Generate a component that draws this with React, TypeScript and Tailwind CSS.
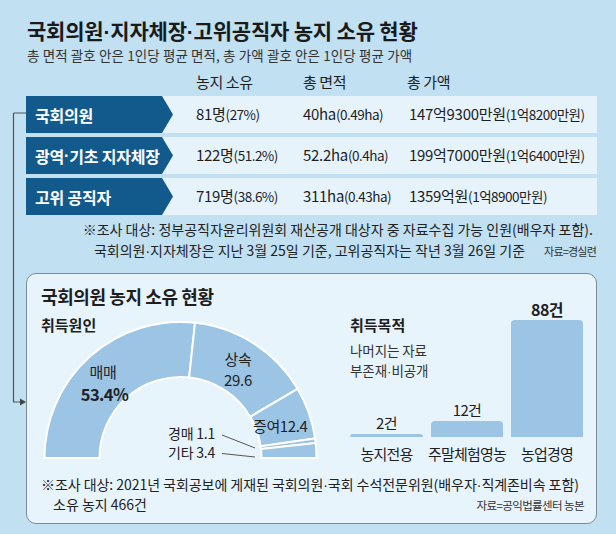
import React from 'react'

interface Row {
  name: string
  count: string
  countP: string
  area: string
  areaP: string
  value: string
  valueP: string
}

const rows: Row[] = [
  { name: '국회의원', count: '81명', countP: '(27%)', area: '40ha', areaP: '(0.49ha)', value: '147억9300만원', valueP: '(1억8200만원)' },
  { name: '광역·기초 지자체장', count: '122명', countP: '(51.2%)', area: '52.2ha', areaP: '(0.4ha)', value: '199억7000만원', valueP: '(1억6400만원)' },
  { name: '고위 공직자', count: '719명', countP: '(38.6%)', area: '311ha', areaP: '(0.43ha)', value: '1359억원', valueP: '(1억8900만원)' },
]

const bars = [
  { label: '농지전용', value: '2건', h: 3, w: 'w-[73px]', bold: false },
  { label: '주말체험영농', value: '12건', h: 16, w: 'w-[72px]', bold: false },
  { label: '농업경영', value: '88건', h: 117, w: 'w-[72px]', bold: true },
]

// the CJK font draws "·" full width; take it from a latin font instead
function Dots({ s }: { s: string }) {
  const parts = s.split('·')
  return (
    <>
      {parts.map((p, i) => (
        <React.Fragment key={i}>
          {i > 0 && <span className="font-['Liberation_Sans',sans-serif]">·</span>}
          {p}
        </React.Fragment>
      ))}
    </>
  )
}

// donut: center / radii in svg coords
const CX = 139.5
const CY = 143
const R = 136
const r = 81

function pt(rad: number, deg: number) {
  const t = (deg * Math.PI) / 180
  return `${(CX + rad * Math.cos(t)).toFixed(2)} ${(CY - rad * Math.sin(t)).toFixed(2)}`
}

function sector(a1: number, a2: number) {
  return `M${pt(R, a1)} A${R} ${R} 0 0 1 ${pt(R, a2)} L${pt(r, a2)} A${r} ${r} 0 0 0 ${pt(r, a1)} Z`
}

const segments: [number, number][] = [
  [180, 83.88],
  [83.88, 30.6],
  [30.6, 8.28],
  [8.28, 6.3],
  [6.3, 0],
]

function Donut() {
  return (
    <svg className="col-start-1 row-start-1 mt-[9px]" width="290" height="150" viewBox="0 0 290 150">
      {segments.map(([a1, a2], i) => (
        <path key={i} d={sector(a1, a2)} fill="#9cc4e4" stroke="#ffffff" strokeWidth="2" strokeLinejoin="miter" />
      ))}
      <g fill="#222222" textAnchor="middle">
        <text x="62" y="63" fontSize="15" letterSpacing="-0.3">매매</text>
        <text x="63.5" y="86" fontSize="16.5" fontWeight="700" letterSpacing="-0.6">53.4%</text>
        <text x="197" y="50" fontSize="15" letterSpacing="-0.3">상속</text>
        <text x="197" y="71" fontSize="15" letterSpacing="-0.3">29.6</text>
      </g>
      <g fill="#222222">
        <text x="212" y="117" fontSize="15" letterSpacing="-0.4">증여12.4</text>
        <text x="127" y="124" fontSize="14" letterSpacing="-0.2">경매 1.1</text>
        <text x="127" y="143" fontSize="14" letterSpacing="-0.2">기타 3.4</text>
      </g>
      <g stroke="#555555" strokeWidth="1">
        <line x1="181" y1="120" x2="214" y2="133" />
        <line x1="181" y1="138.5" x2="214" y2="142" />
      </g>
    </svg>
  )
}

export default function App() {
  return (
    <div className="relative h-[534px] w-[616px] overflow-hidden bg-[#c1e0f2] pl-[26px] pr-[19px] font-['Noto_Sans_CJK_KR','Noto_Sans',sans-serif] text-[#1e1e1e]">
      {/* connector from first row down to the box */}
      <svg className="absolute left-0 top-0" width="30" height="420">
        <path d="M13.5 113 H26 M13.5 113 V402 H21" fill="none" stroke="#555555" strokeWidth="1.2" />
        <polygon points="20,398.5 26,402 20,405.5" fill="#444444" />
      </svg>

      {/* Header */}
      <h1 className="pl-[1px] pt-[18px] text-[21px] font-bold leading-[24px] tracking-[-0.2px] text-[#1a1a1a]">
        <Dots s="국회의원·지자체장·고위공직자 농지 소유 현황" />
      </h1>
      <p className="mt-[1px] pl-[1px] text-[13.5px] leading-[20px] tracking-[0.1px] text-[#333333]">
        총 면적 괄호 안은 1인당 평균 면적, 총 가액 괄호 안은 1인당 평균 가액
      </p>

      {/* Table */}
      <div className="mt-[7px] flex pl-[170px] text-[15px] leading-[20px] tracking-[-0.4px]">
        <div className="w-[107px]">농지 소유</div>
        <div className="w-[104px]">총 면적</div>
        <div>총 가액</div>
      </div>
      <div className="mt-[4px] flex flex-col gap-[4px]">
        {rows.map((row) => (
          <div key={row.name} className="flex h-[37px] items-center bg-[#e6f3fb] text-[15px] tracking-[-0.3px]">
            <div className="flex h-full w-[147px] items-center bg-[#125a8b] pl-[9px] text-[16px] font-bold tracking-[-0.2px] text-white [clip-path:polygon(0_0,136px_0,147px_50%,136px_100%,0_100%)]">
              <Dots s={row.name} />
            </div>
            <div className="ml-[23px] w-[107px]">
              {row.count}
              <span className="text-[13.5px] tracking-[-0.5px]">{row.countP}</span>
            </div>
            <div className="w-[106px]">
              {row.area}
              <span className="text-[13.5px] tracking-[-0.5px]">{row.areaP}</span>
            </div>
            <div className="flex-1">
              {row.value}
              <span className="text-[13.5px] tracking-[-0.5px]">{row.valueP}</span>
            </div>
          </div>
        ))}
      </div>

      {/* Notes */}
      <p className="mt-[4px] pr-[4px] text-right text-[14px] leading-[20px] tracking-[0px] text-[#222222]">
        ※조사 대상: 정부공직자윤리위원회 재산공개 대상자 중 자료수집 가능 인원(배우자 포함).
      </p>
      <div className="mt-[1px] flex items-baseline justify-end text-[#222222]">
        <span className="whitespace-nowrap text-[14px] leading-[20px] tracking-[0px]">
          <Dots s="국회의원·지자체장은 지난 3월 25일 기준, 고위공직자는 작년 3월 26일 기준" />
        </span>
        <span className="ml-[19px] whitespace-nowrap pr-[1px] text-[11px] tracking-[-0.8px] text-[#333333]">자료=경실련</span>
      </div>

      {/* Box */}
      <div className="mt-[12px] h-[251px] rounded-[10px] border border-[#7d8b95] bg-[#e8f4fb]">
        <div className="flex">
          <div className="w-[304px] pl-[14px] pt-[12px]">
            <div className="text-[18px] font-bold leading-[20px] tracking-[-0.4px]">국회의원 농지 소유 현황</div>
            <div className="grid">
              <div className="col-start-1 row-start-1 mt-[9px] text-[15px] font-bold leading-[20px]">취득원인</div>
              <Donut />
            </div>
          </div>

          <div className="flex-1 pl-[19px] pt-[25px]">
            <div className="grid">
              <div className="col-start-1 row-start-1">
                <div className="mt-[16px] text-[15px] font-bold leading-[20px]">취득목적</div>
                <div className="mt-[5px] text-[13.5px] leading-[20px] tracking-[-0.1px] text-[#333333]">나머지는 자료</div>
                <div className="text-[13.5px] leading-[20px] tracking-[-0.1px] text-[#333333]">
                  <Dots s="부존재·비공개" />
                </div>
              </div>
              <div className="col-start-1 row-start-1 flex h-[138px] items-end gap-[8px]">
                {bars.map((b) => (
                  <div key={b.label} className={`flex flex-col items-center ${b.w}`}>
                    <div
                      className={
                        b.bold
                          ? 'mb-[2px] text-[16px] font-bold leading-[18px] tracking-[-0.6px]'
                          : 'mb-[2px] text-[15px] leading-[18px] tracking-[-0.6px]'
                      }
                    >
                      {b.value}
                    </div>
                    <div className="w-full rounded-t-[4px] bg-[#9cc4e4]" style={{ height: b.h }} />
                  </div>
                ))}
              </div>
            </div>
            <div className="mt-[8px] flex gap-[8px] text-[15px] leading-[18px] tracking-[-0.8px]">
              {bars.map((b) => (
                <div key={b.label} className={`flex justify-center whitespace-nowrap ${b.w}`}>
                  {b.label}
                </div>
              ))}
            </div>
          </div>
        </div>

        <div className="pl-[14px] pr-[12px] pt-[10px] text-[#222222]">
          <p className="whitespace-nowrap text-[14px] leading-[19px] tracking-[-0.05px]">
            <Dots s="※조사 대상: 2021년 국회공보에 게재된 국회의원·국회 수석전문위원(배우자·직계존비속 포함)" />
          </p>
          <div className="flex items-baseline justify-between pl-[12px]">
            <span className="text-[14px] leading-[19px] tracking-[0px]">소유 농지 466건</span>
            <span className="text-[11.5px] tracking-[-0.6px] text-[#333333]">자료=공익법률센터 농본</span>
          </div>
        </div>
      </div>
    </div>
  )
}
